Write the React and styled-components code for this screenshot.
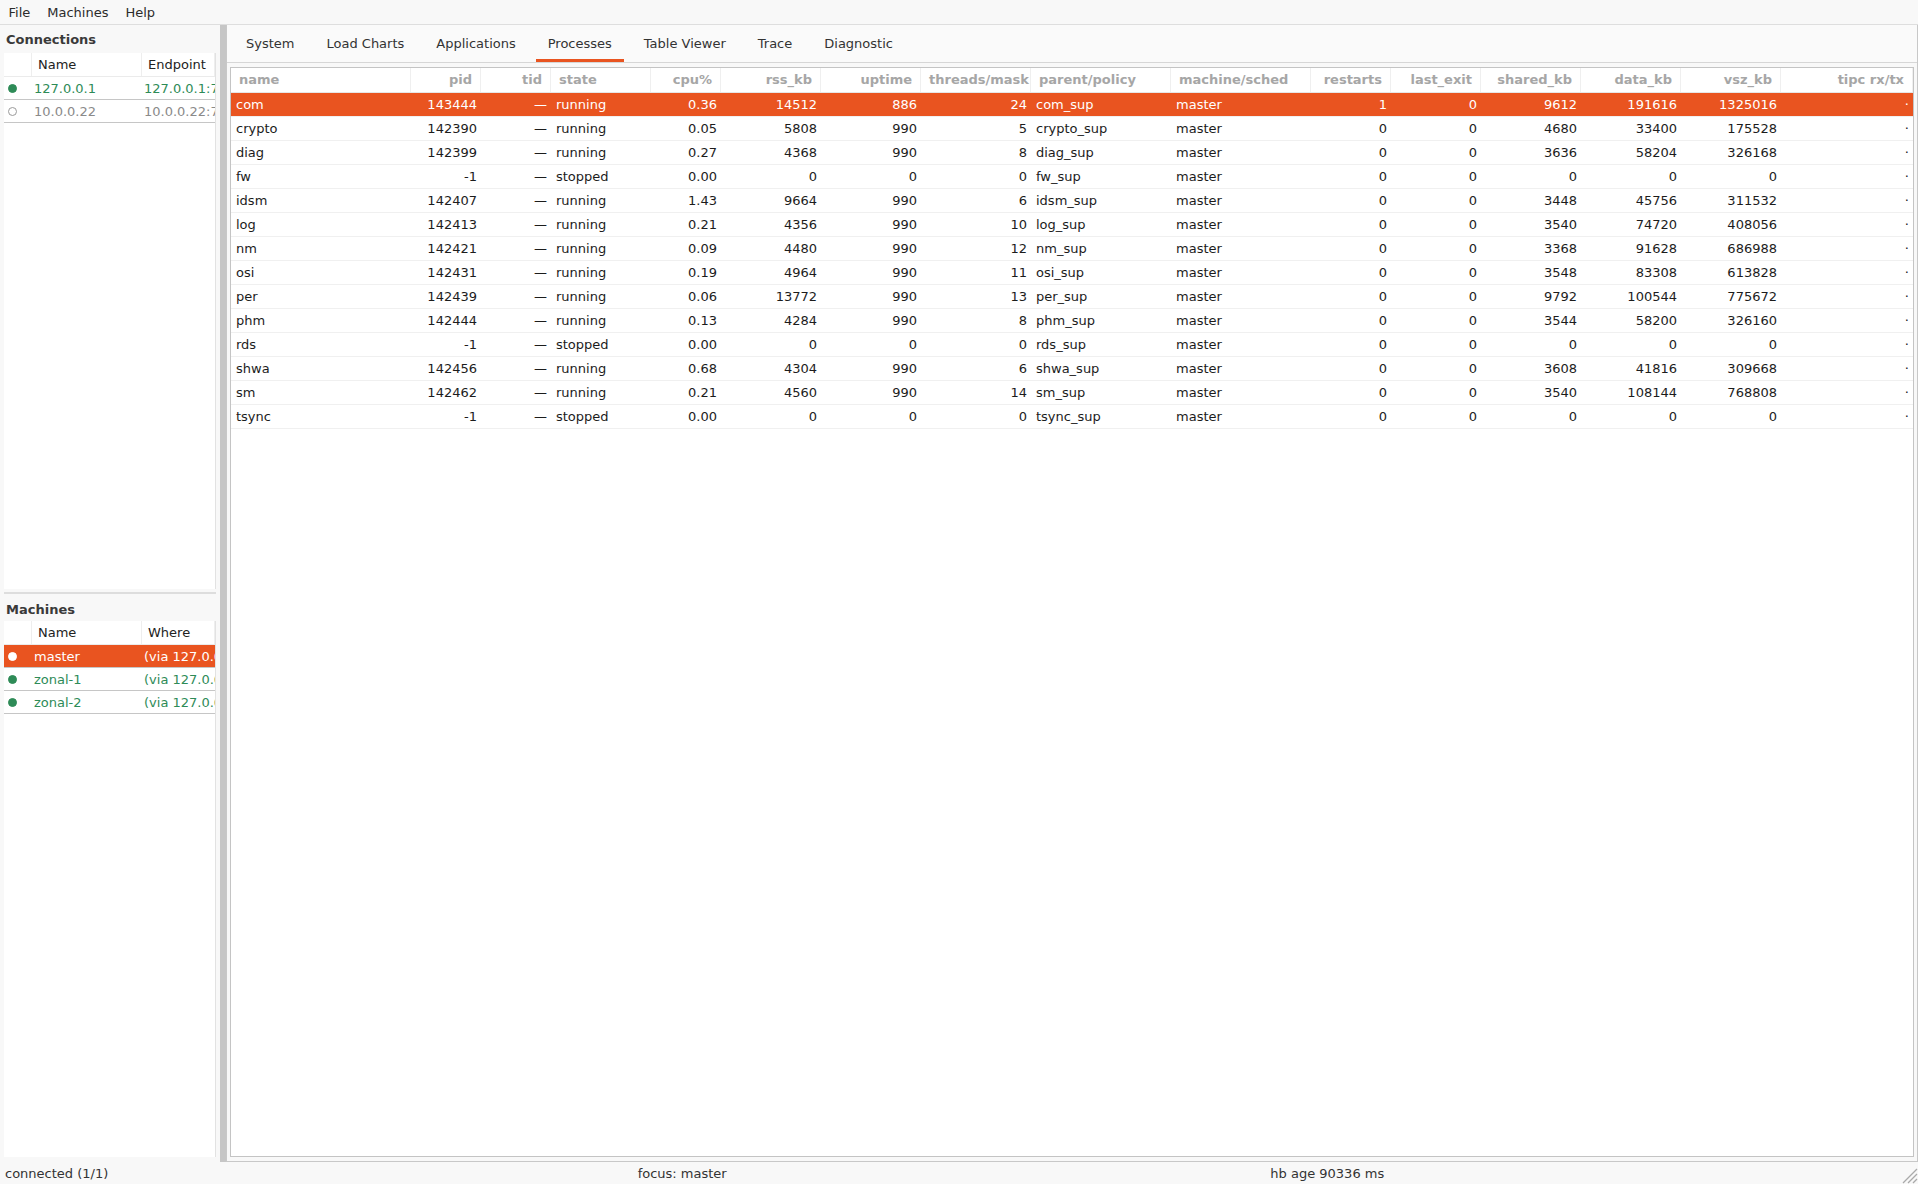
import React from "react";
import styled, { createGlobalStyle } from "styled-components";

const ACCENT = "#e95420";
const GREEN = "#2e8b57";

const columns = [
  { key: "name", label: "name", width: 180, align: "left" },
  { key: "pid", label: "pid", width: 70, align: "right" },
  { key: "tid", label: "tid", width: 70, align: "right" },
  { key: "state", label: "state", width: 100, align: "left" },
  { key: "cpu", label: "cpu%", width: 70, align: "right" },
  { key: "rss", label: "rss_kb", width: 100, align: "right" },
  { key: "uptime", label: "uptime", width: 100, align: "right" },
  { key: "threads", label: "threads/mask", width: 110, align: "right", tight: true },
  { key: "parent", label: "parent/policy", width: 140, align: "left" },
  { key: "machine", label: "machine/sched", width: 140, align: "left" },
  { key: "restarts", label: "restarts", width: 80, align: "right" },
  { key: "lastExit", label: "last_exit", width: 90, align: "right" },
  { key: "shared", label: "shared_kb", width: 100, align: "right" },
  { key: "data", label: "data_kb", width: 100, align: "right" },
  { key: "vsz", label: "vsz_kb", width: 100, align: "right" },
  { key: "tipc", label: "tipc rx/tx", width: null, align: "right" },
];

const gridCols = columns.map((c) => (c.width ? `${c.width}px` : "1fr")).join(" ");

// name, pid, state, cpu, rss, uptime, threads, restarts, shared, data, vsz
const raw = [
  ["com", "143444", "running", "0.36", "14512", "886", "24", "1", "9612", "191616", "1325016"],
  ["crypto", "142390", "running", "0.05", "5808", "990", "5", "0", "4680", "33400", "175528"],
  ["diag", "142399", "running", "0.27", "4368", "990", "8", "0", "3636", "58204", "326168"],
  ["fw", "-1", "stopped", "0.00", "0", "0", "0", "0", "0", "0", "0"],
  ["idsm", "142407", "running", "1.43", "9664", "990", "6", "0", "3448", "45756", "311532"],
  ["log", "142413", "running", "0.21", "4356", "990", "10", "0", "3540", "74720", "408056"],
  ["nm", "142421", "running", "0.09", "4480", "990", "12", "0", "3368", "91628", "686988"],
  ["osi", "142431", "running", "0.19", "4964", "990", "11", "0", "3548", "83308", "613828"],
  ["per", "142439", "running", "0.06", "13772", "990", "13", "0", "9792", "100544", "775672"],
  ["phm", "142444", "running", "0.13", "4284", "990", "8", "0", "3544", "58200", "326160"],
  ["rds", "-1", "stopped", "0.00", "0", "0", "0", "0", "0", "0", "0"],
  ["shwa", "142456", "running", "0.68", "4304", "990", "6", "0", "3608", "41816", "309668"],
  ["sm", "142462", "running", "0.21", "4560", "990", "14", "0", "3540", "108144", "768808"],
  ["tsync", "-1", "stopped", "0.00", "0", "0", "0", "0", "0", "0", "0"],
];

const processes = raw.map((r) => ({
  name: r[0],
  pid: r[1],
  tid: "—",
  state: r[2],
  cpu: r[3],
  rss: r[4],
  uptime: r[5],
  threads: r[6],
  parent: `${r[0]}_sup`,
  machine: "master",
  restarts: r[7],
  lastExit: "0",
  shared: r[8],
  data: r[9],
  vsz: r[10],
  tipc: "·",
}));

const connections = [
  { name: "127.0.0.1", endpoint: "127.0.0.1:7000", status: "up" },
  { name: "10.0.0.22", endpoint: "10.0.0.22:7000", status: "down" },
];

const machines = [
  { name: "master", where: "(via 127.0.0.1)", status: "up", selected: true },
  { name: "zonal-1", where: "(via 127.0.0.1)", status: "up" },
  { name: "zonal-2", where: "(via 127.0.0.1)", status: "up" },
];

const tabs = ["System", "Load Charts", "Applications", "Processes", "Table Viewer", "Trace", "Diagnostic"];

const GlobalStyle = createGlobalStyle`
  * { box-sizing: border-box; }
  html, body { margin: 0; padding: 0; }
  body {
    font-family: "DejaVu Sans", "Liberation Sans", sans-serif;
    font-size: 13px;
    color: #1c1c1c;
    background: #f8f8f8;
  }
`;

const Window = styled.div`
  width: 1918px;
  height: 1184px;
  display: flex;
  flex-direction: column;
  overflow: hidden;
  background: #f8f8f8;
`;

const MenuBar = styled.div`
  height: 25px;
  flex: none;
  display: flex;
  align-items: center;
  border-bottom: 1px solid #dedede;
`;

const MenuItem = styled.span`
  padding: 0 8.5px;
  color: #2b2b2b;
`;

const Body = styled.div`
  flex: 1;
  min-height: 0;
  display: flex;
`;

const LeftPane = styled.div`
  width: 220px;
  flex: none;
  display: flex;
  flex-direction: column;
  padding: 0 4px 5px 4px;
`;

const SectionLabel = styled.div`
  height: ${(p) => p.$h}px;
  flex: none;
  display: flex;
  align-items: center;
  padding-left: 2px;
  font-weight: bold;
  color: #3a3a3a;
`;

const SideList = styled.div`
  flex: 1;
  min-height: 0;
  background: #fff;
  border-right: 1px solid #e2e2e2;
  overflow: hidden;
`;

const SideSplit = styled.div`
  height: 8px;
  flex: none;
  display: flex;
  align-items: center;

  &::after {
    content: "";
    flex: 1;
    height: 2px;
    background: #dddddd;
  }
`;

const SideHeader = styled.div`
  display: grid;
  grid-template-columns: 28px 110px 1fr;
  height: 24px;
  border-bottom: 1px solid #ebebeb;
`;

const SideHeadCell = styled.div`
  padding-left: 6px;
  line-height: 23px;
  color: #222;
  border-right: 1px solid #eeeeee;
  white-space: nowrap;
  overflow: hidden;
`;

const SideRow = styled.div`
  display: grid;
  grid-template-columns: 28px 110px 1fr;
  height: 23px;
  align-items: center;
  border-bottom: 1px solid #c6c6c6;
  background: ${(p) => (p.$selected ? ACCENT : "transparent")};
  color: ${(p) => (p.$selected ? "#fff" : p.$status === "up" ? GREEN : "#8a8a8a")};
`;

const SideCell = styled.div`
  padding-left: 2px;
  white-space: nowrap;
  overflow: hidden;
`;

const DotCell = styled.div`
  display: flex;
  align-items: center;
  padding-left: 4px;
`;

const Dot = styled.span`
  width: 9px;
  height: 9px;
  border-radius: 50%;
  background: ${(p) => (p.$selected ? "#fff" : p.$status === "up" ? GREEN : "#fff")};
  border: 1px solid ${(p) => (p.$selected ? "#fff" : p.$status === "up" ? GREEN : "#9a9a9a")};
`;

const VSplit = styled.div`
  width: 6px;
  flex: none;
  background: #c6c6c6;
`;

const RightPane = styled.div`
  flex: 1;
  min-width: 0;
  display: flex;
  flex-direction: column;
  border: 1px solid #c8c8c8;
  border-top: none;
`;

const TabBar = styled.div`
  height: 38px;
  flex: none;
  display: flex;
  padding-left: 3px;
  background: #fafafa;
  border-bottom: 1px solid #d6d6d6;
`;

const Tab = styled.div`
  position: relative;
  display: flex;
  align-items: center;
  padding: 0 16px;
  color: #333;

  &::after {
    content: "";
    display: ${(p) => (p.$active ? "block" : "none")};
    position: absolute;
    left: 4px;
    right: 4px;
    bottom: 0;
    height: 3px;
    background: ${ACCENT};
  }
`;

const Content = styled.div`
  flex: 1;
  min-height: 0;
  display: flex;
  padding: 4px 3px;
`;

const TableBox = styled.div`
  flex: 1;
  min-width: 0;
  background: #fff;
  border: 1px solid #c4c4c4;
  overflow: hidden;
`;

const HeadRow = styled.div`
  display: grid;
  grid-template-columns: ${gridCols};
  height: 25px;
  border-bottom: 1px solid #e6e6e6;
`;

const HeadCell = styled.div`
  padding: ${(p) => (p.$tight ? "0 1px 0 2px" : "0 8px")};
  text-align: ${(p) => p.$align};
  line-height: 24px;
  font-weight: bold;
  color: #a6a6a6;
  border-right: 1px solid #efefef;
  white-space: nowrap;
  overflow: hidden;
`;

const DataRow = styled.div`
  display: grid;
  grid-template-columns: ${gridCols};
  height: 24px;
  border-bottom: 1px solid #f0f0f0;
  background: ${(p) => (p.$selected ? ACCENT : "transparent")};
  color: ${(p) => (p.$selected ? "#fff" : "#1c1c1c")};
`;

const Cell = styled.div`
  padding: 0 4px 0 5px;
  text-align: ${(p) => p.$align};
  line-height: 23px;
  white-space: nowrap;
  overflow: hidden;
`;

const StatusBar = styled.div`
  height: 22px;
  flex: none;
  display: grid;
  grid-template-columns: 1fr 1fr 1fr 20px;
  align-items: center;
  background: #f8f8f8;
  color: #333;
`;

const StatusText = styled.span`
  padding-left: 5px;
  white-space: nowrap;
`;

const Grip = styled.svg`
  align-self: end;
  justify-self: end;
`;

const SizeGrip = () => (
  <Grip width="18" height="18" viewBox="0 0 18 18">
    <g stroke="#a9a9a9" strokeWidth="1.2">
      <line x1="17" y1="3" x2="3" y2="17" />
      <line x1="17" y1="8" x2="8" y2="17" />
      <line x1="17" y1="13" x2="13" y2="17" />
    </g>
  </Grip>
);

const SideTable = ({ second, rows }) => (
  <SideList>
    <SideHeader>
      <SideHeadCell />
      <SideHeadCell>Name</SideHeadCell>
      <SideHeadCell>{second}</SideHeadCell>
    </SideHeader>
    {rows.map((r) => (
      <SideRow key={r.name} $status={r.status} $selected={r.selected}>
        <DotCell>
          <Dot $status={r.status} $selected={r.selected} />
        </DotCell>
        <SideCell>{r.name}</SideCell>
        <SideCell>{r.endpoint || r.where}</SideCell>
      </SideRow>
    ))}
  </SideList>
);

const App = () => {
  return (
    <Window>
      <GlobalStyle />
      <MenuBar>
        <MenuItem>File</MenuItem>
        <MenuItem>Machines</MenuItem>
        <MenuItem>Help</MenuItem>
      </MenuBar>

      <Body>
        <LeftPane>
          <SectionLabel $h={28}>Connections</SectionLabel>
          <SideTable second="Endpoint" rows={connections} />
          <SideSplit />
          <SectionLabel $h={24}>Machines</SectionLabel>
          <SideTable second="Where" rows={machines} />
        </LeftPane>

        <VSplit />

        <RightPane>
          <TabBar>
            {tabs.map((t) => (
              <Tab key={t} $active={t === "Processes"}>
                {t}
              </Tab>
            ))}
          </TabBar>
          <Content>
            <TableBox>
              <HeadRow>
                {columns.map((c) => (
                  <HeadCell key={c.key} $align={c.align} $tight={c.tight}>
                    {c.label}
                  </HeadCell>
                ))}
              </HeadRow>
              {processes.map((p, i) => (
                <DataRow key={p.name} $selected={i === 0}>
                  {columns.map((c) => (
                    <Cell key={c.key} $align={c.align}>
                      {p[c.key]}
                    </Cell>
                  ))}
                </DataRow>
              ))}
            </TableBox>
          </Content>
        </RightPane>
      </Body>

      <StatusBar>
        <StatusText>connected (1/1)</StatusText>
        <StatusText>focus: master</StatusText>
        <StatusText>hb age 90336 ms</StatusText>
        <SizeGrip />
      </StatusBar>
    </Window>
  );
};

export default App;
